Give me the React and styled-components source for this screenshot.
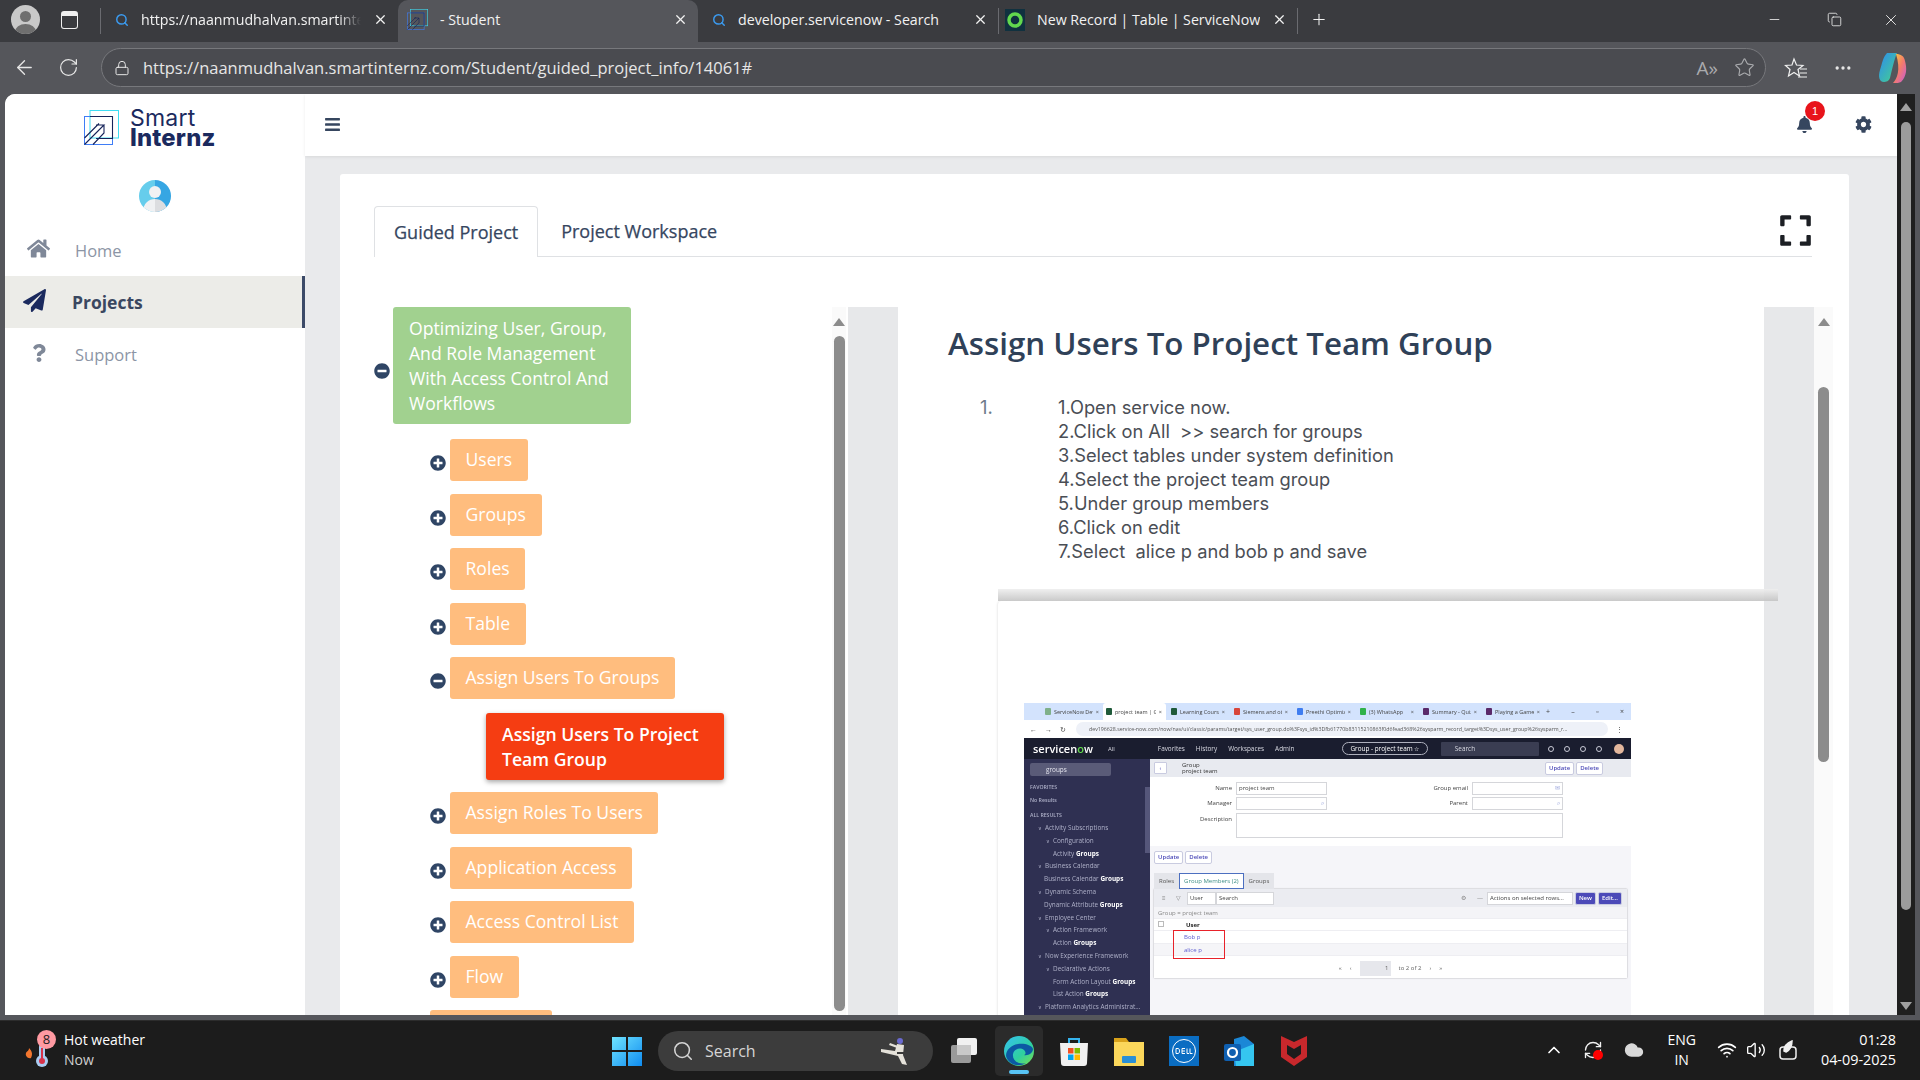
import React from 'react';
import styled, { createGlobalStyle } from 'styled-components';
import { FaBars, FaBell, FaCog, FaExpand, FaHome, FaMinusCircle, FaPaperPlane, FaPlusCircle, FaQuestion } from 'react-icons/fa';
import { ArrowLeft, ChevronUp, Cloud, Copy, Lock, Minus, MoreHorizontal, Plus, RefreshCw, RotateCw, Search, Star, Volume2, Wifi, X } from 'lucide-react';

const GlobalStyle = createGlobalStyle`
  html, body {
    margin: 0;
    width: 1920px;
    height: 1080px;
    overflow: hidden;
    background: #55565b;
    font-family: 'Open Sans', 'Noto Sans', sans-serif;
  }
  * { box-sizing: border-box; }
`;

const Screen = styled.div`
  width: 1920px;
  height: 1080px;
  display: flex;
  flex-direction: column;
`;

/* browser chrome */

const TabBar = styled.div`
  height: 42px;
  background: #3a3b3f;
  display: flex;
  align-items: stretch;
  padding-left: 11px;
  color: #f2f2f2;
`;

const Avatar = styled.div`
  width: 29px;
  height: 29px;
  margin-top: 5px;
  border-radius: 50%;
  background: #c9c9c9;
  position: relative;
  overflow: hidden;
  &::before {
    content: '';
    position: absolute;
    left: 9px;
    top: 6px;
    width: 11px;
    height: 11px;
    border-radius: 50%;
    background: #6f6f6f;
  }
  &::after {
    content: '';
    position: absolute;
    left: 4px;
    top: 19px;
    width: 21px;
    height: 16px;
    border-radius: 50%;
    background: #6f6f6f;
  }
`;

const WorkspaceIcon = styled.div`
  width: 17px;
  height: 18px;
  margin: 11px 0 0 21px;
  border: 1.5px solid #f0f0f0;
  border-top-width: 5px;
  border-radius: 3px;
`;

const TabDivider = styled.div`
  width: 1px;
  height: 26px;
  margin: 8px 0 0 ${p => p.$left || 0}px;
  background: #6a6b70;
`;

const Tab = styled.div`
  width: ${p => p.$width}px;
  display: flex;
  align-items: center;
  gap: 12px;
  padding: 0 10px 3px ${p => p.$pad || 12}px;
  font-size: 14.2px;
  white-space: nowrap;
  border-radius: ${p => (p.$active ? '10px 10px 0 0' : '0')};
  background: ${p => (p.$active ? '#55565b' : 'transparent')};
`;

const TabTitle = styled.span`
  flex: 1;
  min-width: 0;
  overflow: hidden;
  mask-image: ${p => (p.$fade ? 'linear-gradient(to right, #000 90%, transparent)' : 'none')};
`;

const WindowControls = styled.div`
  margin-left: auto;
  display: flex;
  align-items: center;
  gap: 40px;
  padding: 0 20px 3px 0;
`;

const MinimizeSlot = styled.span`
  display: flex;
  margin-right: 5px;
`;

const AddressRow = styled.div`
  height: 52px;
  background: #55565b;
  display: flex;
  align-items: center;
  padding: 0 12px 1px 13px;
  color: #e6e6e6;
`;

const NavIcons = styled.div`
  display: flex;
  align-items: center;
  gap: 22px;
  width: 88px;
`;

const UrlBar = styled.div`
  width: 1667px;
  height: 39px;
  border: 1px solid #77787c;
  border-radius: 20px;
  background: #4a4b50;
  display: flex;
  align-items: center;
  gap: 13px;
  padding: 0 10px 0 12px;
  font-size: 16.5px;
`;

const UrlText = styled.span`
  flex: 1;
`;

const ReadAloud = styled.span`
  font-size: 19px;
  color: #a9aaad;
  margin-right: 3px;
`;

const BrowserActions = styled.div`
  display: flex;
  align-items: center;
  gap: 25px;
  margin-left: 18px;
`;

/* page frame */

const PageFrame = styled.div`
  flex: 1;
  min-height: 0;
  margin: 0 5px 5px;
  border-radius: 10px 0 0 0;
  overflow: hidden;
  display: flex;
  background: #fff;
`;

const Sidebar = styled.aside`
  width: 300px;
  flex: none;
  background: #fff;
  padding-top: 16px;
`;

const LogoRow = styled.div`
  display: flex;
  gap: 11px;
  padding-left: 79px;
  height: 70px;
`;

const LogoText = styled.div`
  color: #1b2a5e;
  font-family: Inter, sans-serif;
  font-size: 23px;
  line-height: 20px;
  letter-spacing: 0.2px;
  margin-top: -2px;
`;

const LogoBold = styled.div`
  font-weight: 800;
  font-size: 23.8px;
  line-height: 20px;
`;

const UserAvatar = styled.div`
  width: 32px;
  height: 32px;
  margin: 0 0 0 134px;
  border-radius: 50%;
  overflow: hidden;
`;

const NavList = styled.nav`
  margin-top: 12px;
`;

const NavItem = styled.div`
  height: 52px;
  display: flex;
  align-items: center;
  font-size: ${p => (p.$active ? 17.5 : 16.5)}px;
  font-weight: ${p => (p.$active ? 700 : 400)};
  color: ${p => (p.$active ? '#3a4760' : '#8c95a5')};
  background: ${p => (p.$active ? '#ecece8' : 'transparent')};
  border-right: ${p => (p.$active ? '3px solid #3c4a68' : 'none')};
  padding-left: ${p => (p.$active ? 18 : 22)}px;
`;

const NavIcon = styled.span`
  width: ${p => (p.$active ? 49 : 48)}px;
  display: flex;
  font-size: ${p => p.$size || 23}px;
  padding-left: ${p => p.$pad || 0}px;
  margin-top: -3px;
  color: ${p => (p.$active ? '#1b2a5e' : '#7f8898')};
`;

const Workspace = styled.div`
  flex: 1;
  min-width: 0;
  display: flex;
  flex-direction: column;
`;

const TopBar = styled.header`
  height: 62px;
  flex: none;
  background: #fff;
  display: flex;
  align-items: center;
  padding: 0 25px 2px 19px;
  color: #36465f;
  box-shadow: 0 1px 3px rgba(0, 0, 0, 0.08);
  position: relative;
`;

const TopRight = styled.div`
  margin-left: auto;
  display: flex;
  align-items: center;
  gap: 42px;
`;

const Bell = styled.div`
  position: relative;
  display: flex;
  font-size: 17px;
`;

const Badge = styled.span`
  position: absolute;
  left: 9px;
  top: -15px;
  width: 20px;
  height: 20px;
  border-radius: 50%;
  background: #e8141b;
  color: #fff;
  font-family: 'Liberation Sans', sans-serif;
  font-size: 11px;
  line-height: 20px;
  text-align: center;
`;

const Main = styled.main`
  flex: 1;
  min-height: 0;
  background: #e9eaec;
  padding: 18px 48px 0 35px;
  overflow: hidden;
`;

const Card = styled.div`
  background: #fff;
  height: 100%;
  padding: 32px 16px 0 34px;
  border-radius: 3px 3px 0 0;
  display: flex;
  flex-direction: column;
`;

const TabsRow = styled.div`
  flex: none;
  height: 51px;
  display: flex;
  align-items: stretch;
  border-bottom: 1px solid #dfe1e4;
  margin-right: 21px;
  color: #36465f;
`;

const PageTab = styled.div`
  display: flex;
  align-items: center;
  padding: 0 ${p => (p.$active ? 19 : 22)}px 1px;
  font-size: 18px;
  -webkit-text-stroke: 0.25px #36465f;
  border: 1px solid ${p => (p.$active ? '#dfe1e4' : 'transparent')};
  border-bottom: none;
  border-radius: 4px 4px 0 0;
  background: ${p => (p.$active ? '#fff' : 'transparent')};
  margin-bottom: ${p => (p.$active ? -1 : 0)}px;
`;

const FullScreen = styled.div`
  margin-left: auto;
  font-size: 35px;
  display: flex;
  align-items: center;
  color: #1c1f24;
  margin-right: -1px;
  padding-bottom: 1px;
`;

const Panels = styled.div`
  flex: 1;
  min-height: 0;
  margin-top: 50px;
  display: flex;
`;

const TreePanel = styled.div`
  width: 474px;
  flex: none;
  display: flex;
`;

const Tree = styled.div`
  flex: 1;
  display: flex;
  flex-direction: column;
  align-items: flex-start;
`;

const Row = styled.div`
  display: flex;
  align-items: center;
  gap: ${p => (p.$root ? 3 : 4)}px;
  margin-left: ${p => p.$indent || 0}px;
  margin-bottom: ${p => p.$after ?? 12.5}px;
`;

const Toggle = styled.span`
  display: flex;
  font-size: 16px;
  color: #2f4565;
  transform: translateY(${p => (p.$root ? 5 : 3)}px);
`;

const colours = {
  root: '#a1d18f',
  leaf: '#ffbd7e',
  current: '#f53d12',
};

const Node = styled.div`
  background: ${p => colours[p.$kind]};
  color: #fff;
  font-size: 17.6px;
  line-height: 25px;
  font-weight: ${p => (p.$kind === 'current' ? 600 : 400)};
  border-radius: 3px;
  padding: ${p => (p.$kind === 'leaf' ? '8px 15.5px 9px' : '9px 16px 8px')};
  width: ${p => (p.$kind === 'leaf' ? 'auto' : '238px')};
  box-shadow: ${p => (p.$kind === 'current' ? '0 2px 5px rgba(0,0,0,0.35)' : 'none')};
`;

const StubNode = styled.div`
  width: 122px;
  height: 42px;
  border-radius: 3px;
  background: ${colours.leaf};
`;

const ScrollTrack = styled.div`
  flex: none;
  width: ${p => p.$width}px;
  margin-right: ${p => p.$right || 0}px;
  background: #fafafa;
  display: flex;
  flex-direction: column;
  align-items: center;
  padding-top: 11px;
`;

const ArrowUp = styled.div`
  width: 0;
  height: 0;
  border-left: 6px solid transparent;
  border-right: 6px solid transparent;
  border-bottom: 8px solid ${p => p.$color || '#8c8c8c'};
`;

const ArrowDown = styled.div`
  width: 0;
  height: 0;
  margin-top: ${p => p.$top}px;
  border-left: 6px solid transparent;
  border-right: 6px solid transparent;
  border-top: 8px solid ${p => p.$color || '#8c8c8c'};
`;

const Thumb = styled.div`
  width: ${p => p.$width || 11}px;
  height: ${p => p.$height}px;
  margin-top: ${p => p.$top}px;
  border-radius: 6px;
  background: ${p => p.$color || '#8c8c8c'};
`;

const Reader = styled.div`
  flex: 1;
  min-width: 0;
  display: flex;
`;

const Gutter = styled.div`
  width: 50px;
  flex: none;
  background: #e7e8ea;
`;

const ReaderBody = styled.article`
  width: 866px;
  flex: none;
  background: #fff;
  padding-left: 50px;
  position: relative;
`;

const Title = styled.h1`
  margin: 0;
  padding-top: 14px;
  font-size: 31.3px;
  line-height: 45px;
  font-weight: 600;
  color: #2f4158;
`;

const Steps = styled.div`
  display: flex;
  margin: 29px 0 26px 32px;
  font-family: Inter, sans-serif;
  font-size: 18.3px;
  line-height: 24px;
  white-space: pre;
  color: #4a4e55;
`;

const Marker = styled.div`
  width: 78px;
  color: #6d7a8a;
`;

const ImageCard = styled.div`
  margin-left: 50px;
  width: 766px;
`;

const CardBand = styled.div`
  width: 780px;
  height: 12px;
  background: linear-gradient(to bottom, rgba(238, 238, 238, 0.9), rgba(196, 196, 196, 0.9));
  position: relative;
`;

const CardBody = styled.div`
  background: #fff;
  padding: 102px 0 0 26px;
  border-radius: 4px 0 0 0;
  box-shadow: -1px 0 2px rgba(0, 0, 0, 0.08);
  height: 420px;
`;

/* the picture inside the lesson: a small ServiceNow window */

const Shot = styled.div`
  width: 607px;
  height: 330px;
  display: flex;
  flex-direction: column;
  overflow: hidden;
  font-family: 'Open Sans', sans-serif;
  font-size: 6px;
  color: #444;
  filter: blur(0.35px);
  background: #fff;
`;

const ShotTabs = styled.div`
  height: 17px;
  flex: none;
  background: #d3e3fd;
  display: flex;
  align-items: center;
  padding-left: 16px;
`;

const ShotTab = styled.div`
  width: 63px;
  height: 100%;
  padding: 0 4px 0 ${p => (p.$active ? 3 : 5)}px;
  display: flex;
  align-items: center;
  gap: 3px;
  font-size: 5.5px;
  white-space: nowrap;
  overflow: hidden;
  background: ${p => (p.$active ? '#fff' : 'transparent')};
  border-radius: 3px 3px 0 0;
`;

const ShotTabName = styled.span`
  flex: 1;
  overflow: hidden;
`;

const ShotFavicon = styled.span`
  width: 6px;
  height: 7px;
  flex: none;
  border-radius: 1px;
  background: ${p => p.$color};
`;

const ShotWindowButtons = styled.div`
  flex: 1;
  display: flex;
  justify-content: space-between;
  padding: 0 7px 0 2px;
  font-size: 7px;
`;

const ShotAddress = styled.div`
  height: 18px;
  flex: none;
  display: flex;
  align-items: center;
  gap: 8px;
  padding: 0 8px 0 6px;
  font-size: 7px;
  background: #fff;
`;

const ShotUrl = styled.div`
  flex: 1;
  min-width: 0;
  height: 14px;
  line-height: 14px;
  padding-left: 13px;
  margin-left: 2px;
  border-radius: 7px;
  background: #eef1f8;
  font-size: 5.26px;
  color: #555;
  white-space: nowrap;
  overflow: hidden;
`;

const ShotHeader = styled.div`
  height: 21px;
  flex: none;
  background: #1a1d2f;
  color: #d9dae3;
  display: flex;
  align-items: center;
  padding-left: 9px;
`;

const ShotBrand = styled.span`
  color: #fff;
  font-size: 11px;
  font-weight: 600;
  width: 75px;
`;

const ShotBrandAccent = styled.span`
  color: #62d84e;
`;

const ShotMenu = styled.div`
  display: flex;
  gap: 11px;
  width: 184px;
  margin-left: 43px;
  font-size: 6.4px;
`;

const ShotPill = styled.div`
  width: 86px;
  height: 13px;
  border: 1px solid #aeb0bd;
  border-radius: 7px;
  font-size: 6.4px;
  text-align: center;
  line-height: 11px;
  color: #fff;
`;

const ShotSearch = styled.div`
  width: 98px;
  height: 14px;
  margin-left: 13px;
  background: #3a3d52;
  border-radius: 1px;
  padding-left: 14px;
  line-height: 14px;
  font-size: 6.4px;
`;

const ShotHeaderDots = styled.div`
  display: flex;
  gap: 10px;
  margin-left: 9px;
`;

const ShotDot = styled.span`
  width: 6px;
  height: 6px;
  border: 1px solid #c9cad6;
  border-radius: 50%;
`;

const ShotFace = styled.span`
  width: 10px;
  height: 10px;
  margin-left: 12px;
  border-radius: 50%;
  background: #e3b79d;
`;

const ShotBody = styled.div`
  flex: 1;
  min-height: 0;
  display: flex;
`;

const ShotNav = styled.div`
  width: 126px;
  flex: none;
  padding: 4px 0 0 6px;
  background: #2f3052;
  color: #aeb0c8;
  font-size: 6.4px;
  position: relative;
`;

const ShotNavThumb = styled.div`
  position: absolute;
  right: 0;
  top: 28px;
  width: 5px;
  height: 66px;
  background: #55567a;
`;

const ShotFilter = styled.div`
  width: 81px;
  height: 13px;
  border-radius: 2px;
  padding-left: 16px;
  line-height: 13px;
  color: #e4e4ee;
  background: #5a5b78;
`;

const ShotNavLabel = styled.div`
  font-size: 5.2px;
  font-weight: 600;
  line-height: 13px;
  margin-top: ${p => p.$top || 0}px;
`;

const ShotNavItem = styled.div`
  height: 12.8px;
  line-height: 12.8px;
  white-space: nowrap;
  padding-left: ${p => p.$level}px;
`;

const ShotChevron = styled.span`
  display: inline-block;
  width: 7px;
  margin-left: -7px;
  font-size: 5px;
`;

const ShotBold = styled.b`
  color: #fff;
  font-weight: 700;
`;

const ShotMain = styled.div`
  flex: 1;
  min-width: 0;
  background: #fff;
`;

const ShotFormBar = styled.div`
  height: 18px;
  display: flex;
  align-items: center;
  padding: 0 26px 0 4px;
  line-height: 6.5px;
  background: #e8eaf0;
  color: #333;
`;

const ShotBack = styled.span`
  width: 13px;
  height: 12px;
  line-height: 11px;
  text-align: center;
  margin-right: 15px;
  border: 1px solid #c9cbe0;
  border-radius: 1px;
  background: #fff;
  color: #4c4ab8;
`;

const ShotButton = styled.span`
  display: inline-block;
  height: 13px;
  line-height: 11px;
  padding: 0 3px;
  margin-right: ${p => p.$right ?? 2}px;
  border: 1px solid #c9cbe0;
  border-radius: 2px;
  background: ${p => (p.$solid ? '#4c4ab8' : '#fff')};
  color: ${p => (p.$solid ? '#fff' : '#4c4ab8')};
  font-size: 6px;
  font-weight: 600;
`;

const ShotFormBarActions = styled.div`
  margin-left: auto;
  display: flex;
`;

const ShotForm = styled.div`
  height: 69px;
  padding-top: 5px;
  display: grid;
  grid-template-columns: 86px 91px 145px 91px;
  grid-auto-rows: 13px;
  row-gap: 2.3px;
  align-content: start;
`;

const ShotLabel = styled.span`
  text-align: right;
  padding-right: 4px;
  line-height: 13px;
`;

const ShotInput = styled.span`
  border: 1px solid #d5d6da;
  padding: 0 2px;
  line-height: 11px;
  background: #fff;
  display: flex;
  justify-content: ${p => (p.$icon ? 'flex-end' : 'flex-start')};
  color: ${p => (p.$icon ? '#8f9bd8' : 'inherit')};
`;

const ShotTextarea = styled(ShotInput)`
  grid-column: 2 / 5;
  height: 25px;
`;

const ShotLower = styled.div`
  height: 250px;
  background: #f5f5f9;
  padding: 5px 4px 0 4px;
`;

const ShotTabsRow = styled.div`
  display: flex;
  margin-top: 9px;
  height: 16px;
  align-items: stretch;
`;

const ShotInnerTab = styled.span`
  padding: 0 4px;
  line-height: 14px;
  border: 1px solid ${p => (p.$active ? '#4c6fc0' : 'transparent')};
  color: ${p => (p.$active ? '#3f8f86' : '#555')};
  background: ${p => (p.$active ? '#fff' : '#e4e5ea')};
`;

const ShotList = styled.div`
  background: #fff;
  box-shadow: 0 0 1.5px rgba(0, 0, 0, 0.35);
`;

const ShotListBar = styled.div`
  height: 18px;
  display: flex;
  align-items: center;
  padding: 0 5px 0 8px;
  background: #ebecf1;
`;

const ShotBarGlyph = styled.span`
  width: ${p => p.$width}px;
  margin-left: ${p => (p.$push ? 'auto' : 0)};
  color: #888;
`;

const ShotMiniInput = styled.span`
  width: ${p => p.$width}px;
  height: 13px;
  line-height: 11px;
  padding-left: 2px;
  border: 1px solid #d5d6da;
  background: #fff;
  white-space: nowrap;
  margin-right: ${p => p.$right || 0}px;
`;

const ShotListRow = styled.div`
  height: ${p => p.$height || 12.5}px;
  line-height: ${p => p.$height || 12.5}px;
  padding-left: ${p => p.$pad}px;
  border-bottom: 1px solid #eeeef2;
  background: ${p => p.$bg || '#fff'};
  color: ${p => p.$color || '#555'};
  font-weight: ${p => (p.$bold ? 700 : 400)};
`;

const ShotCheck = styled.span`
  display: inline-block;
  width: 6px;
  height: 6px;
  margin: 0 22px 0 -26px;
  border: 1px solid #bbb;
`;

const ShotRows = styled.div`
  position: relative;
`;

const ShotHighlight = styled.div`
  position: absolute;
  left: 19px;
  top: -1.3px;
  width: 52px;
  height: 29px;
  border: 1.5px solid #e8222a;
`;

const ShotPager = styled.div`
  height: 22px;
  padding-top: 5px;
  display: flex;
  justify-content: center;
  gap: 8px;
  color: #666;
  line-height: 15px;
`;

const ShotPageBox = styled.span`
  width: 31px;
  height: 15px;
  padding-right: 2px;
  text-align: right;
  background: #e6e7ec;
`;

/* taskbar */

const Taskbar = styled.footer`
  height: 60px;
  flex: none;
  background: #1c1c1c;
  border-top: 1px solid #2c2c2c;
  display: flex;
  align-items: center;
  color: #fff;
  position: relative;
`;

const Weather = styled.div`
  width: 612px;
  padding: 0 0 2px 25px;
  display: flex;
  align-items: center;
  gap: 8px;
  font-size: 14px;
  line-height: 20px;
`;

const WeatherNow = styled.div`
  color: #cfcfcf;
`;

const WeatherIcon = styled.div`
  position: relative;
  width: 31px;
  height: 40px;
`;

const WeatherBadge = styled.span`
  position: absolute;
  right: 0;
  top: 0;
  width: 19px;
  height: 19px;
  border-radius: 50%;
  background: #ff9aa2;
  color: #1c1c1c;
  font-size: 13px;
  line-height: 19px;
  text-align: center;
`;

const SearchPill = styled.div`
  width: 275px;
  height: 40px;
  margin: 0 15.5px 0 16px;
  border-radius: 20px;
  background: #3c3c3c;
  display: flex;
  align-items: center;
  gap: 11px;
  padding: 0 20px 0 14px;
  font-size: 16px;
  color: #d5d5d5;
`;

const SearchLabel = styled.span`
  flex: 1;
`;

const AppStrip = styled.div`
  display: flex;
  align-items: center;
  gap: 25px;
`;

const AppTile = styled.div`
  width: 30px;
  height: 30px;
  display: flex;
  position: relative;
  &::before {
    content: '';
    display: ${p => (p.$active ? 'block' : 'none')};
    position: absolute;
    inset: -10px -9px -10px -9px;
    border-radius: 5px;
    background: #2b2b2b;
  }
  &::after {
    content: '';
    display: ${p => (p.$active ? 'block' : 'none')};
    position: absolute;
    left: 5px;
    bottom: -8px;
    width: 20px;
    height: 4px;
    border-radius: 2px;
    background: #58c4f5;
  }
  svg { position: relative; z-index: 1; }
`;

const Tray = styled.div`
  margin-left: auto;
  display: flex;
  align-items: center;
  padding: 0 24px 2px 0;
`;

const TrayIcon = styled.span`
  display: flex;
  position: relative;
  margin-left: ${p => p.$left}px;
`;

const SyncDot = styled.span`
  position: absolute;
  right: 0;
  bottom: 0;
  width: 10px;
  height: 10px;
  border-radius: 50%;
  background: #f00;
`;

const TrayText = styled.div`
  font-size: ${p => p.$size || 14}px;
  line-height: 20px;
  text-align: ${p => p.$align || 'center'};
  margin-left: ${p => p.$left}px;
`;

const PageScroll = styled.div`
  width: 18px;
  flex: none;
  background: #1f1f1f;
  display: flex;
  flex-direction: column;
  align-items: center;
  padding-top: 9px;
`;

const LogoMark = ({ size = 35 }) => (
  <svg width={size} height={size} viewBox="0 0 35 35" fill="none">
    <rect x="6" y="0.5" width="28.5" height="27.5" stroke="#3fdcf2" />
    <rect x="0.5" y="6.5" width="28" height="28" stroke="#3f7df6" />
    <path d="M6 6.5H28.5V28.5H12M0.5 34.5L20 15H12M0.5 28L15 13.5M20 15V23L9 34.5" stroke="#16245a" strokeWidth="1.1" />
  </svg>
);

const Person = () => (
  <svg width="32" height="32" viewBox="0 0 32 32">
    <rect width="16" height="32" fill="#66cdec" />
    <rect x="16" width="16" height="32" fill="#36a6e3" />
    <circle cx="16" cy="12" r="6" fill="#f0f1f3" />
    <path d="M4 32C4 23 10 19 16 19V32Z" fill="#f0f1f3" />
    <path d="M28 32C28 23 22 19 16 19V32Z" fill="#dcdde0" />
  </svg>
);

const SearchGlyph = () => <Search size={14} color="#3b9bf0" strokeWidth={2.5} />;

const ServiceNowMark = () => (
  <svg width="20" height="22" viewBox="0 0 20 22">
    <rect width="20" height="22" fill="#10313f" />
    <circle cx="10" cy="11" r="6" fill="none" stroke="#62d84e" strokeWidth="3.5" />
  </svg>
);

const ReadingList = () => (
  <svg width="24" height="24" viewBox="0 0 24 24" fill="none" stroke="#f0f0f0" strokeWidth="1.2">
    <path d="M10 3L12.5 9L19 9.5L14 13.5L15.5 20L10 16.5L4.5 20L6 13.5L1.5 9.5L8 9Z" />
    <path d="M16 13H23M16 17H23M14 21H23" />
  </svg>
);

const CopilotIcon = () => (
  <svg width="30" height="32" viewBox="0 0 30 32">
    <defs>
      <linearGradient id="cpA" x1="0" y1="0" x2="1" y2="1">
        <stop offset="0" stopColor="#2d8cf0" />
        <stop offset="1" stopColor="#46d38a" />
      </linearGradient>
      <linearGradient id="cpB" x1="0" y1="0" x2="1" y2="1">
        <stop offset="0" stopColor="#f5d33c" />
        <stop offset="0.5" stopColor="#f57c6a" />
        <stop offset="1" stopColor="#c45ad8" />
      </linearGradient>
    </defs>
    <path d="M9 1H19C16 8 14 18 12 26C11 29 8 30 6 30C1 30 0 24 2 18C4 12 5 5 9 1Z" fill="url(#cpA)" />
    <path d="M18 2C23 2 26 4 27 9C29 16 29 24 23 30C21 31 19 31 15 31C19 27 23 18 18 2Z" fill="url(#cpB)" />
  </svg>
);

const Thermometer = () => (
  <svg width="31" height="40" viewBox="0 0 31 40">
    <path d="M4 18C7 21 8 24 6 28C3 29 0 26 1 23C2 21 4 21 4 18Z" fill="#f2762e" />
    <rect x="14" y="14" width="6" height="16" rx="3" fill="#a9cdf2" />
    <circle cx="17" cy="31" r="6" fill="#a9cdf2" />
    <circle cx="17" cy="31" r="3" fill="#d8324a" />
    <rect x="16" y="18" width="2" height="12" fill="#d8324a" />
  </svg>
);

const WindowsLogo = () => (
  <svg width="30" height="30" viewBox="0 0 30 30">
    <defs>
      <linearGradient id="winG" x1="0" y1="0" x2="1" y2="1">
        <stop offset="0" stopColor="#6fe3ff" />
        <stop offset="1" stopColor="#0f8cf0" />
      </linearGradient>
    </defs>
    <path d="M0 1H14V14H0ZM16 1H30V14H16ZM0 16H14V30H0ZM16 16H30V30H16Z" fill="url(#winG)" />
  </svg>
);

const Fighter = () => (
  <svg width="36" height="30" viewBox="0 0 36 30">
    <circle cx="23" cy="5" r="3" fill="#6a6ad0" />
    <path d="M20 8L27 9L26 19L30 29L25 28L21 20L4 16L4 13L18 15Z" fill="#e5e2da" />
    <path d="M13 7L21 10L20 12L12 9Z" fill="#e5e2da" />
    <path d="M20 16H27V18H20Z" fill="#3a3a3a" />
  </svg>
);

const TaskViewIcon = () => (
  <svg width="30" height="30" viewBox="0 0 30 30">
    <rect x="8" y="2" width="20" height="17" rx="2" fill="#f1f1f1" />
    <rect x="2" y="9" width="20" height="18" rx="2" fill="#9a9a9a" />
    <rect x="8" y="9" width="14" height="10" fill="#c9c9c9" />
  </svg>
);

const EdgeIcon = () => (
  <svg width="30" height="30" viewBox="0 0 30 30">
    <defs>
      <linearGradient id="edgeG" x1="0" y1="0" x2="1" y2="1">
        <stop offset="0" stopColor="#35c1f1" />
        <stop offset="0.6" stopColor="#2fd0a0" />
        <stop offset="1" stopColor="#7fe04a" />
      </linearGradient>
    </defs>
    <circle cx="15" cy="15" r="15" fill="url(#edgeG)" />
    <path d="M2 20C4 28 14 32 22 27C15 29 8 25 9 18C10 13 16 11 20 14C22 16 22 18 20 19C24 20 29 17 29 13C28 9 20 7 14 8C7 9 2 14 2 20Z" fill="#0c59a4" />
  </svg>
);

const StoreIcon = () => (
  <svg width="30" height="30" viewBox="0 0 30 30">
    <path d="M10 7V3H20V7" fill="none" stroke="#35b4ee" strokeWidth="2" />
    <path d="M1 7H29L28 27C28 29 27 30 25 30H5C3 30 2 29 2 27Z" fill="#f1f1f1" />
    <rect x="9" y="12" width="5.5" height="5.5" fill="#f25022" />
    <rect x="15.5" y="12" width="5.5" height="5.5" fill="#7fba00" />
    <rect x="9" y="18.5" width="5.5" height="5.5" fill="#00a4ef" />
    <rect x="15.5" y="18.5" width="5.5" height="5.5" fill="#ffb900" />
  </svg>
);

const FolderIcon = () => (
  <svg width="30" height="30" viewBox="0 0 30 30">
    <path d="M0 2H12L15 6H30V10H0Z" fill="#d9a21a" />
    <rect y="6" width="30" height="24" fill="#fbd75b" />
    <rect x="8" y="20" width="14" height="7" rx="1" fill="#2a8fd6" />
  </svg>
);

const DellIcon = () => (
  <svg width="30" height="30" viewBox="0 0 30 30">
    <rect width="30" height="30" fill="#0a6dc2" />
    <circle cx="15" cy="15" r="11.5" fill="none" stroke="#fff" strokeWidth="1" />
    <path d="M7 12.5V17.5H9C11 17.5 11 12.5 9 12.5ZM13 12.5H16M13 15H16M13 17.5H16M13 12.5V17.5M18 12.5V17.5H20M21 12.5V17.5H23.5" fill="none" stroke="#fff" strokeWidth="1" />
  </svg>
);

const OutlookIcon = () => (
  <svg width="30" height="30" viewBox="0 0 30 30">
    <path d="M10 3L20 0L30 8V30H10Z" fill="#1b87d6" />
    <path d="M10 16L30 8V30H12Z" fill="#35c6f0" />
    <rect y="8" width="17" height="17" rx="2" fill="#0f5fb0" />
    <circle cx="8.5" cy="16.5" r="4.5" fill="none" stroke="#fff" strokeWidth="2.2" />
  </svg>
);

const McAfeeIcon = () => (
  <svg width="30" height="30" viewBox="0 0 30 30">
    <path d="M2 0L15 6L28 0V21L15 30L2 21Z" fill="#c8282c" />
    <path d="M8 9L15 13L22 9V18L15 23L8 18Z" fill="#1c1c1c" />
  </svg>
);

const BatteryLeaf = () => (
  <svg width="20" height="22" viewBox="0 0 20 22" fill="none" stroke="#f0f0f0" strokeWidth="1.5">
    <path d="M5 8H15C17 8 18 9 18 11V17C18 19 17 20 15 20H5C3 20 2 19 2 17V11C2 9 3 8 5 8Z" />
    <path d="M6 12C6 7 9 4 14 2C14 7 12 11 8 13Z" fill="#f0f0f0" />
  </svg>
);

const outerNodes = ['Assign Roles To Users', 'Application Access', 'Access Control List', 'Flow'];

const shotTabs = [
  { label: 'ServiceNow Dev', color: '#7fb08a' },
  { label: 'project team | G', color: '#1f5a3a', active: true },
  { label: 'Learning Cours', color: '#1f5a3a' },
  { label: 'Siemens and ot', color: '#d8453a' },
  { label: 'Preethi Optimiz', color: '#3f7df0' },
  { label: '(3) WhatsApp', color: '#31b24a' },
  { label: 'Summary - Quiz', color: '#5a2a6a' },
  { label: 'Playing a Game', color: '#5a2a6a' },
];

const shotNavItems = [
  { text: 'Activity Subscriptions', level: 15, open: true },
  { text: 'Configuration', level: 23, open: true },
  { text: 'Activity ', bold: 'Groups', level: 23 },
  { text: 'Business Calendar', level: 15, open: true },
  { text: 'Business Calendar ', bold: 'Groups', level: 14 },
  { text: 'Dynamic Schema', level: 15, open: true },
  { text: 'Dynamic Attribute ', bold: 'Groups', level: 14 },
  { text: 'Employee Center', level: 15, open: true },
  { text: 'Action Framework', level: 23, open: true },
  { text: 'Action ', bold: 'Groups', level: 23 },
  { text: 'Now Experience Framework', level: 15, open: true },
  { text: 'Declarative Actions', level: 23, open: true },
  { text: 'Form Action Layout ', bold: 'Groups', level: 23 },
  { text: 'List Action ', bold: 'Groups', level: 23 },
  { text: 'Platform Analytics Administrat...', level: 15, open: true },
];

const steps = [
  '1.Open service now.',
  '2.Click on All  >> search for groups',
  '3.Select tables under system definition',
  '4.Select the project team group',
  '5.Under group members',
  '6.Click on edit',
  '7.Select  alice p and bob p and save',
];

const ServiceNowShot = () => (
  <Shot>
    <ShotTabs>
      {shotTabs.map(tab => (
        <ShotTab key={tab.label} $active={tab.active}>
          <ShotFavicon $color={tab.color} />
          <ShotTabName>{tab.label}</ShotTabName>
          ×
        </ShotTab>
      ))}
      <ShotWindowButtons>
        <span>+</span>
        <span>–</span>
        <span>▫</span>
        <span>×</span>
      </ShotWindowButtons>
    </ShotTabs>
    <ShotAddress>
      <span>←</span>
      <span>→</span>
      <span>↻</span>
      <ShotUrl>dev196628.service-now.com/now/nav/ui/classic/params/target/sys_user_group.do%3Fsys_id%3Dfb61770b83115210863f0d6fead368%26sysparm_record_target%3Dsys_user_group%26sysparm_r...</ShotUrl>
      <span>⋮</span>
    </ShotAddress>
    <ShotHeader>
      <ShotBrand>servicen<ShotBrandAccent>o</ShotBrandAccent>w</ShotBrand>
      <span>All</span>
      <ShotMenu>
        <span>Favorites</span>
        <span>History</span>
        <span>Workspaces</span>
        <span>Admin</span>
      </ShotMenu>
      <ShotPill>Group - project team ☆</ShotPill>
      <ShotSearch>Search</ShotSearch>
      <ShotHeaderDots>
        <ShotDot />
        <ShotDot />
        <ShotDot />
        <ShotDot />
      </ShotHeaderDots>
      <ShotFace />
    </ShotHeader>
    <ShotBody>
      <ShotNav>
        <ShotFilter>groups</ShotFilter>
        <ShotNavLabel $top={5}>FAVORITES</ShotNavLabel>
        <ShotNavLabel>No Results</ShotNavLabel>
        <ShotNavLabel $top={2}>ALL RESULTS</ShotNavLabel>
        {shotNavItems.map(item => (
          <ShotNavItem key={item.text + item.level} $level={item.level}>
            {item.open && <ShotChevron>∨</ShotChevron>}
            {item.text}
            {item.bold && <ShotBold>{item.bold}</ShotBold>}
          </ShotNavItem>
        ))}
        <ShotNavThumb />
      </ShotNav>
      <ShotMain>
        <ShotFormBar>
          <ShotBack>‹</ShotBack>
          <div>
            Group
            <br />
            project team
          </div>
          <ShotFormBarActions>
            <ShotButton>Update</ShotButton>
            <ShotButton>Delete</ShotButton>
          </ShotFormBarActions>
        </ShotFormBar>
        <ShotForm>
          <ShotLabel>Name</ShotLabel>
          <ShotInput>project team</ShotInput>
          <ShotLabel>Group email</ShotLabel>
          <ShotInput $icon>✉</ShotInput>
          <ShotLabel>Manager</ShotLabel>
          <ShotInput $icon>⌕</ShotInput>
          <ShotLabel>Parent</ShotLabel>
          <ShotInput $icon>⌕</ShotInput>
          <ShotLabel>Description</ShotLabel>
          <ShotTextarea />
        </ShotForm>
        <ShotLower>
          <ShotButton>Update</ShotButton>
          <ShotButton>Delete</ShotButton>
          <ShotTabsRow>
            <ShotInnerTab>Roles</ShotInnerTab>
            <ShotInnerTab $active>Group Members (2)</ShotInnerTab>
            <ShotInnerTab>Groups</ShotInnerTab>
          </ShotTabsRow>
          <ShotList>
            <ShotListBar>
              <ShotBarGlyph $width={14}>≡</ShotBarGlyph>
              <ShotBarGlyph $width={11}>▽</ShotBarGlyph>
              <ShotMiniInput $width={29}>User</ShotMiniInput>
              <ShotMiniInput $width={58}>Search</ShotMiniInput>
              <ShotBarGlyph $width={16} $push>⚙</ShotBarGlyph>
              <ShotBarGlyph $width={10}>—</ShotBarGlyph>
              <ShotMiniInput $width={86} $right={2}>Actions on selected rows...</ShotMiniInput>
              <ShotButton $solid>New</ShotButton>
              <ShotButton $solid $right={0}>Edit...</ShotButton>
            </ShotListBar>
            <ShotListRow $height={12} $pad={4} $bg="#f4f4f7" $color="#888">Group = project team</ShotListRow>
            <ShotListRow $height={12} $pad={30} $color="#222" $bold>
              <ShotCheck />
              User
            </ShotListRow>
            <ShotRows>
              <ShotListRow $pad={30} $color="#5a5ad0">Bob p</ShotListRow>
              <ShotListRow $pad={30} $color="#5a5ad0" $bg="#f5f5f8">alice p</ShotListRow>
              <ShotHighlight />
            </ShotRows>
            <ShotPager>
              <span>«</span>
              <span>‹</span>
              <ShotPageBox>1</ShotPageBox>
              <span>to 2 of 2</span>
              <span>›</span>
              <span>»</span>
            </ShotPager>
          </ShotList>
        </ShotLower>
      </ShotMain>
    </ShotBody>
  </Shot>
);

class App extends React.Component {
  render() {
    return (
      <Screen>
        <GlobalStyle />

        <TabBar>
          <Avatar />
          <WorkspaceIcon />
          <TabDivider $left={22} />
          <Tab $width={297} $pad={14}>
            <SearchGlyph />
            <TabTitle $fade>https://naanmudhalvan.smartinternz.com</TabTitle>
            <X size={15} />
          </Tab>
          <Tab $width={300} $pad={9} $active>
            <LogoMark size={21} />
            <TabTitle>- Student</TabTitle>
            <X size={15} />
          </Tab>
          <Tab $width={300} $pad={14}>
            <SearchGlyph />
            <TabTitle>developer.servicenow - Search</TabTitle>
            <X size={15} />
          </Tab>
          <TabDivider />
          <Tab $width={298} $pad={6}>
            <ServiceNowMark />
            <TabTitle>New Record | Table | ServiceNow</TabTitle>
            <X size={15} />
          </Tab>
          <TabDivider />
          <Tab $width={40} $pad={12}>
            <Plus size={19} strokeWidth={1.4} />
          </Tab>
          <WindowControls>
            <MinimizeSlot><Minus size={15} strokeWidth={1.3} /></MinimizeSlot>
            <Copy size={15} strokeWidth={1.3} />
            <X size={18} strokeWidth={1.2} />
          </WindowControls>
        </TabBar>

        <AddressRow>
          <NavIcons>
            <ArrowLeft size={23} strokeWidth={1.4} />
            <RotateCw size={21} strokeWidth={1.4} />
          </NavIcons>
          <UrlBar>
            <Lock size={16} strokeWidth={1.5} />
            <UrlText>https://naanmudhalvan.smartinternz.com/Student/guided_project_info/14061#</UrlText>
            <ReadAloud>A»</ReadAloud>
            <Star size={21} strokeWidth={1.3} color="#a9aaad" />
          </UrlBar>
          <BrowserActions>
            <ReadingList />
            <MoreHorizontal size={20} />
            <CopilotIcon />
          </BrowserActions>
        </AddressRow>

        <PageFrame>
          <Sidebar>
            <LogoRow>
              <LogoMark />
              <LogoText>
                Smart
                <LogoBold>Internz</LogoBold>
              </LogoText>
            </LogoRow>
            <UserAvatar>
              <Person />
            </UserAvatar>
            <NavList>
              <NavItem>
                <NavIcon><FaHome /></NavIcon>
                Home
              </NavItem>
              <NavItem $active>
                <NavIcon $active><FaPaperPlane /></NavIcon>
                Projects
              </NavItem>
              <NavItem>
                <NavIcon $size={18} $pad={3}><FaQuestion /></NavIcon>
                Support
              </NavItem>
            </NavList>
          </Sidebar>

          <Workspace>
            <TopBar>
              <FaBars size={17} />
              <TopRight>
                <Bell>
                  <FaBell />
                  <Badge>1</Badge>
                </Bell>
                <FaCog size={17} />
              </TopRight>
            </TopBar>

            <Main>
              <Card>
                <TabsRow>
                  <PageTab $active>Guided Project</PageTab>
                  <PageTab>Project Workspace</PageTab>
                  <FullScreen><FaExpand /></FullScreen>
                </TabsRow>

                <Panels>
                  <TreePanel>
                    <Tree>
                      <Row $root $after={15}>
                        <Toggle $root><FaMinusCircle /></Toggle>
                        <Node $kind="root">Optimizing User, Group, And Role Management With Access Control And Workflows</Node>
                      </Row>
                      {['Users', 'Groups', 'Roles', 'Table'].map(label => (
                        <Row key={label} $indent={56}>
                          <Toggle><FaPlusCircle /></Toggle>
                          <Node $kind="leaf">{label}</Node>
                        </Row>
                      ))}
                      <Row $indent={56} $after={14}>
                        <Toggle><FaMinusCircle /></Toggle>
                        <Node $kind="leaf">Assign Users To Groups</Node>
                      </Row>
                      <Row $indent={112} $after={12}>
                        <Node $kind="current">Assign Users To Project Team Group</Node>
                      </Row>
                      {outerNodes.map(label => (
                        <Row key={label} $indent={56}>
                          <Toggle><FaPlusCircle /></Toggle>
                          <Node $kind="leaf">{label}</Node>
                        </Row>
                      ))}
                      <Row $indent={56}>
                        <StubNode />
                      </Row>
                    </Tree>
                    <ScrollTrack $width={14} $right={2}>
                      <ArrowUp />
                      <Thumb $top={10} $height={675} />
                    </ScrollTrack>
                  </TreePanel>

                  <Reader>
                    <Gutter />
                    <ReaderBody>
                      <Title>Assign Users To Project Team Group</Title>
                      <Steps>
                        <Marker>1.</Marker>
                        <div>
                          {steps.map(step => (
                            <div key={step}>{step}</div>
                          ))}
                        </div>
                      </Steps>
                      <ImageCard>
                        <CardBand />
                        <CardBody>
                          <ServiceNowShot />
                        </CardBody>
                      </ImageCard>
                    </ReaderBody>
                    <Gutter />
                    <ScrollTrack $width={19}>
                      <ArrowUp />
                      <Thumb $top={61} $height={375} />
                    </ScrollTrack>
                  </Reader>
                </Panels>
              </Card>
            </Main>
          </Workspace>

          <PageScroll>
            <ArrowUp $color="#a0a0a0" />
            <Thumb $top={11} $height={788} $width={10} $color="#9c9c9c" />
            <ArrowDown $top={92} $color="#a0a0a0" />
          </PageScroll>
        </PageFrame>

        <Taskbar>
          <Weather>
            <WeatherIcon>
              <Thermometer />
              <WeatherBadge>8</WeatherBadge>
            </WeatherIcon>
            <div>
              Hot weather
              <WeatherNow>Now</WeatherNow>
            </div>
          </Weather>
          <WindowsLogo />
          <SearchPill>
            <Search size={22} strokeWidth={1.7} />
            <SearchLabel>Search</SearchLabel>
            <Fighter />
          </SearchPill>
          <AppStrip>
            <AppTile><TaskViewIcon /></AppTile>
            <AppTile $active><EdgeIcon /></AppTile>
            <AppTile><StoreIcon /></AppTile>
            <AppTile><FolderIcon /></AppTile>
            <AppTile><DellIcon /></AppTile>
            <AppTile><OutlookIcon /></AppTile>
            <AppTile><McAfeeIcon /></AppTile>
          </AppStrip>
          <Tray>
            <TrayIcon $left={0}><ChevronUp size={20} /></TrayIcon>
            <TrayIcon $left={19}>
              <RefreshCw size={20} strokeWidth={1.6} color="#f0f0f0" />
              <SyncDot />
            </TrayIcon>
            <TrayIcon $left={21}><Cloud size={20} fill="#d9d9d9" color="#d9d9d9" /></TrayIcon>
            <TrayText $left={23}>ENG<br />IN</TrayText>
            <TrayIcon $left={21}><Wifi size={20} /></TrayIcon>
            <TrayIcon $left={9}><Volume2 size={20} strokeWidth={1.6} /></TrayIcon>
            <TrayIcon $left={12}><BatteryLeaf /></TrayIcon>
            <TrayText $left={23} $size={14.4} $align="right">01:28<br />04-09-2025</TrayText>
          </Tray>
        </Taskbar>
      </Screen>
    );
  }
}

export default App;
